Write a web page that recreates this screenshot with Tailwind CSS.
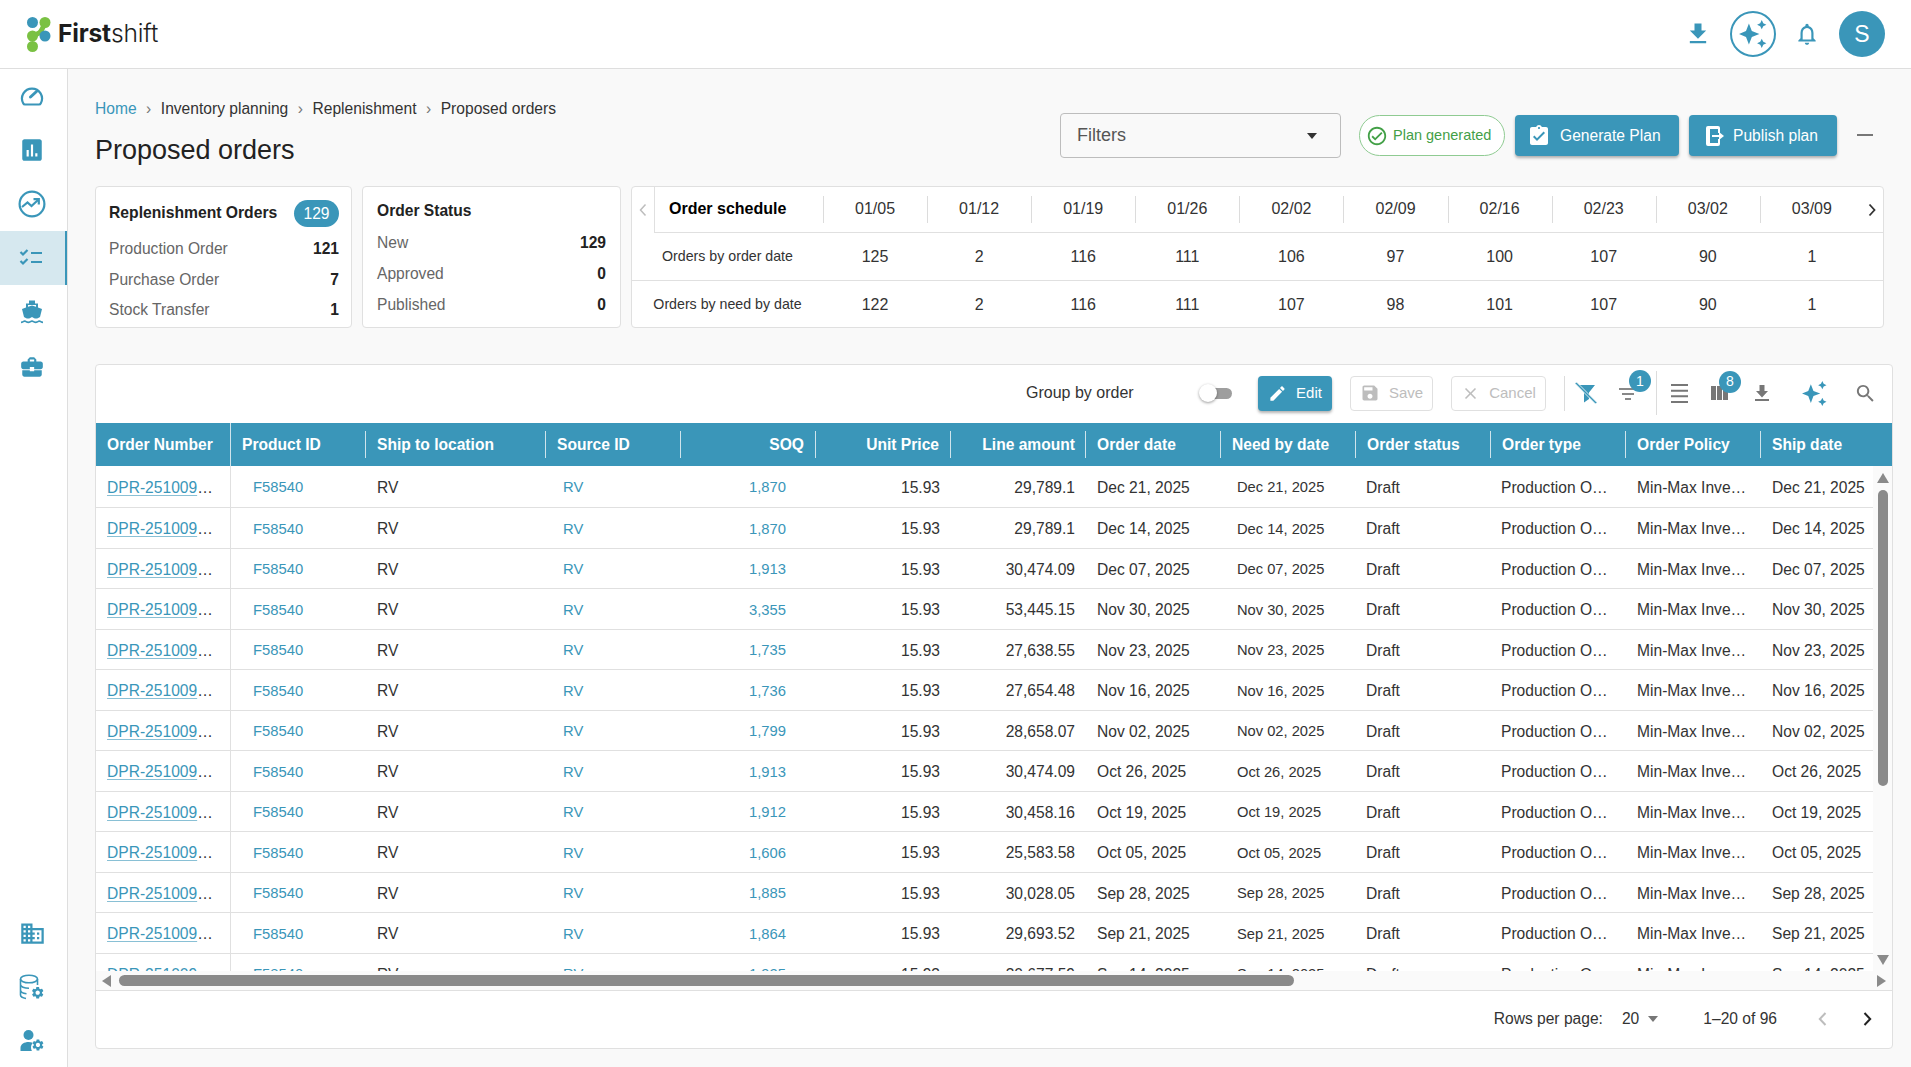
<!DOCTYPE html>
<html lang="en">
<head>
    <meta charset="UTF-8">
    <title>Firstshift - Proposed orders</title>
    <script src="https://cdn.jsdelivr.net/npm/@tailwindcss/browser@4"></script>
</head>
<body class="h-screen overflow-hidden bg-[#f9f9f9] text-[15.6px] text-[#333] font-['Liberation_Sans',Arial,sans-serif]">

    <!-- top bar -->
    <header class="h-[69px] bg-white border-b border-[#dedede] flex items-center">
        <svg class="ml-[26px] w-[26px] h-[36px] -mt-[1px]" viewBox="0 0 26 36">
            <path d="M6 25 C6 20 9 19 13 17 C16 15 16 12 19 8" stroke="#7ac143" stroke-width="5" fill="none"/>
            <circle cx="6.5" cy="6.5" r="5.5" fill="#3a96b9"/>
            <circle cx="19" cy="6.5" r="5.5" fill="#7ac143"/>
            <circle cx="19" cy="20" r="5.5" fill="#3a96b9"/>
            <circle cx="6.5" cy="20" r="5.5" fill="#7ac143"/>
            <circle cx="6.5" cy="30.5" r="5.5" fill="#7ac143"/>
        </svg>
        <div class="ml-[6px] -mt-[2px] text-[24.6px] leading-none text-[#1d1d1d] font-['Inter',sans-serif] tracking-[-0.2px]"><span class="font-bold">First</span><span class="font-light">shift</span></div>

        <div class="ml-auto flex items-center pr-[26px]">
            <svg class="w-[28px] h-[28px] text-[#3a96b9]" viewBox="0 0 24 24" fill="currentColor"><path d="M19 9h-4V3H9v6H5l7 7 7-7zM5 18v2h14v-2H5z"/></svg>
            <div class="ml-[18px] w-[46px] h-[46px] rounded-full border-2 border-[#3a96b9] flex items-center justify-center text-[#3a96b9]">
                <svg class="w-[28px] h-[28px]" viewBox="0 0 24 24" fill="currentColor"><path d="M8.5 3 11 9.5 17.5 12 11 14.5 8.5 21 6 14.5 0 12 6 9.5Z M19.5 0 20.8 2.700 23.5 4 20.8 5.300 19.5 8 18.2 5.300 15.5 4 18.2 2.700Z M19.5 16 20.8 18.700 23.5 20 20.8 21.300 19.500 24 18.200 21.300 15.500 20 18.200 18.700Z"/></svg>
            </div>
            <svg class="ml-[18px] w-[26px] h-[26px] text-[#3a96b9]" viewBox="0 0 24 24" fill="currentColor"><path d="M12 22c1.100 0 2-.9 2-2h-4c0 1.100.9 2 2 2zm6-6v-5c0-3.070-1.630-5.640-4.500-6.320V4c0-.83-.67-1.500-1.500-1.500s-1.500.67-1.500 1.500v.68C7.640 5.360 6 7.920 6 11v5l-2 2v1h16v-1l-2-2zm-2 1H8v-6c0-2.480 1.510-4.500 4-4.500s4 2.020 4 4.500v6z"/></svg>
            <div class="ml-[19px] w-[46px] h-[46px] rounded-full bg-[#3a96b9] text-white text-[23px] flex items-center justify-center">S</div>
        </div>
    </header>

    <div class="flex h-[998px]">
        <!-- side nav -->
        <nav class="w-[68px] shrink-0 bg-white border-r border-[#dedede] flex flex-col justify-between text-[#3a96b9] overflow-hidden">
            <div class="flex flex-col">
                <div class="h-[54px] pr-[3px] flex items-center justify-center">
                    <svg class="w-[24px] h-[24px]" viewBox="0 0 24 24" fill="none" stroke="currentColor" stroke-width="2.2"><path d="M5 20.5h14a2 2 0 0 0 1.8-1.2A10 10 0 1 0 3.2 19.3 2 2 0 0 0 5 20.5z"/><path d="M16.5 7.5 10.5 13" stroke-width="3" stroke-linecap="round"/></svg>
                </div>
                <div class="h-[54px] pr-[3px] flex items-center justify-center">
                    <svg class="w-[26px] h-[26px]" viewBox="0 0 24 24" fill="currentColor"><path d="M19 2H5C3.900 2 3 2.900 3 4v16c0 1.100.9 2 2 2h14c1.100 0 2-.9 2-2V4c0-1.100-.9-2-2-2zM9 18H7v-6h2v6zm4 0h-2V7h2v11zm4 0h-2v-3h2v3z"/></svg>
                </div>
                <div class="h-[54px] pr-[3px] flex items-center justify-center">
                    <svg class="w-[28px] h-[28px]" viewBox="0 0 28 28" fill="none" stroke="currentColor" stroke-width="2.2"><circle cx="14" cy="14" r="12.4"/><path d="M4 17 9.500 12.500 13.500 16 20 10"/><path d="M15.500 9.200H20.800V14.500"/></svg>
                </div>
                <div class="h-[54px] pr-[3px] flex items-center justify-center bg-[#d6e8ef] border-r-2 border-[#3a96b9]">
                    <svg class="w-[24px] h-[24px]" viewBox="0 0 24 24" fill="none" stroke="currentColor" stroke-width="2.2"><path d="M1.500 6 4 8.500 8.500 4"/><path d="M1.500 15 4 17.500 8.500 13"/><path d="M12 7h11M12 16h11"/></svg>
                </div>
                <div class="h-[54px] pr-[3px] flex items-center justify-center">
                    <svg class="w-[24px] h-[26px]" viewBox="0 -1.5 24 26" fill="currentColor"><path d="M9 0h6v3h3v4l4 1.500-2 8c-1 .9-2.500 1.500-4 1.500-1.600 0-3-.6-4-1.500-1 .9-2.400 1.500-4 1.500-1.500 0-3-.6-4-1.500l-2-8L6 7V3h3z"/><path d="M8 6.200 12 5l4 1.200v-1.600H8z" fill="#fff"/><path d="M1 21c2 0 2-1.300 3.700-1.300S6.700 21 8.300 21s2-1.300 3.700-1.300S14 21 15.700 21s2-1.300 3.600-1.300S21.500 21 23 21v1.800c-2 0-2-1.300-3.700-1.300s-2 1.300-3.600 1.300-2-1.300-3.700-1.300-2 1.300-3.700 1.300-2-1.300-3.600-1.300S2.800 22.800 1 22.800z"/></svg>
                </div>
                <div class="h-[54px] pr-[3px] pt-[2px] flex items-center justify-center">
                    <svg class="w-[26px] h-[26px]" viewBox="0 0 24 24" fill="currentColor"><path d="M10 16v-1H3.010L3 19c0 1.110.89 2 2 2h14c1.110 0 2-.89 2-2v-4h-7v1h-4zm10-9h-4.010V5l-2-2h-4l-2 2v2H4c-1.100 0-2 .9-2 2v3c0 1.110.89 2 2 2h6v-2h4v2h6c1.100 0 2-.9 2-2V9c0-1.100-.9-2-2-2zm-6 0h-4V5h4v2z"/></svg>
                </div>
            </div>
            <div class="flex flex-col -mb-[1px]">
                <div class="h-[54px] pr-[3px] flex items-center justify-center">
                    <svg class="w-[27px] h-[27px]" viewBox="0 0 24 24" fill="currentColor"><path d="M12 7V3H2v18h20V7H12zM6 19H4v-2h2v2zm0-4H4v-2h2v2zm0-4H4V9h2v2zm0-4H4V5h2v2zm4 12H8v-2h2v2zm0-4H8v-2h2v2zm0-4H8V9h2v2zm0-4H8V5h2v2zm10 12h-8v-2h2v-2h-2v-2h2v-2h-2V9h8v10zm-2-8h-2v2h2v-2zm0 4h-2v2h2v-2z"/></svg>
                </div>
                <div class="h-[54px] pr-[3px] flex items-center justify-center">
                    <svg class="w-[26px] h-[26px]" viewBox="0 0 26 26" fill="none" stroke="currentColor" stroke-width="1.6">
                        <ellipse cx="10" cy="5" rx="8.5" ry="3.8"/>
                        <path d="M1.500 5v16c0 1.800 2.600 3 5.500 3.500M18.500 5v6M1.500 10.500c0 2.200 3.800 3.800 8.500 3.800M1.500 16c0 2 2.500 3.400 6 3.700"/>
                        <g transform="translate(11.5 11.5) scale(.6)" fill="currentColor" stroke="none"><path d="M19.140 12.940c.04-.3.06-.61.06-.94 0-.32-.02-.64-.07-.94l2.030-1.580a.49.49 0 0 0 .12-.61l-1.920-3.320a.488.488 0 0 0-.59-.22l-2.390.96c-.5-.38-1.030-.7-1.620-.94l-.36-2.540a.484.484 0 0 0-.48-.41h-3.840c-.24 0-.43.17-.47.41l-.36 2.540c-.59.24-1.130.57-1.620.94l-2.390-.96c-.22-.08-.47 0-.59.22L2.740 8.870c-.12.21-.08.47.12.61l2.030 1.580c-.05.3-.09.63-.09.94s.02.64.07.94l-2.030 1.580a.49.49 0 0 0-.12.61l1.920 3.320c.12.22.37.29.59.22l2.390-.96c.5.38 1.030.7 1.620.94l.36 2.540c.05.24.24.41.48.41h3.840c.24 0 .44-.17.47-.41l.36-2.540c.59-.24 1.130-.56 1.620-.94l2.390.96c.22.08.47 0 .59-.22l1.920-3.320c.12-.22.07-.47-.12-.61l-2.010-1.580zM12 15.600c-1.980 0-3.600-1.620-3.600-3.600s1.620-3.600 3.600-3.600 3.600 1.620 3.600 3.600-1.620 3.600-3.600 3.600z"/></g>
                    </svg>
                </div>
                <div class="h-[54px] pr-[3px] flex items-center justify-center">
                    <svg class="w-[26px] h-[24px]" viewBox="0 0 26 24" fill="currentColor">
                        <circle cx="9.5" cy="6" r="5"/>
                        <path d="M1.500 22v-3c0-4 4-6 8-6 1.600 0 3 .3 4.200.8-1 1.500-1.700 3-1.700 4.700 0 1.300.3 2.400.9 3.500z"/>
                        <g transform="translate(12 9) scale(.58)"><path d="M19.140 12.940c.04-.3.06-.61.06-.94 0-.32-.02-.64-.07-.94l2.030-1.580a.49.49 0 0 0 .12-.61l-1.920-3.320a.488.488 0 0 0-.59-.22l-2.390.96c-.5-.38-1.030-.7-1.620-.94l-.36-2.540a.484.484 0 0 0-.48-.41h-3.840c-.24 0-.43.17-.47.41l-.36 2.540c-.59.24-1.130.57-1.620.94l-2.390-.96c-.22-.08-.47 0-.59.22L2.740 8.870c-.12.21-.08.47.12.61l2.030 1.580c-.05.3-.09.63-.09.94s.02.64.07.94l-2.030 1.580a.49.49 0 0 0-.12.61l1.920 3.320c.12.22.37.29.59.22l2.390-.96c.5.38 1.030.7 1.620.94l.36 2.540c.05.24.24.41.48.41h3.840c.24 0 .44-.17.47-.41l.36-2.540c.59-.24 1.130-.56 1.620-.94l2.390.96c.22.08.47 0 .59-.22l1.920-3.320c.12-.22.07-.47-.12-.61l-2.010-1.580zM12 15.600c-1.980 0-3.600-1.620-3.600-3.600s1.620-3.600 3.600-3.600 3.600 1.620 3.600 3.600-1.620 3.600-3.600 3.600z"/></g>
                    </svg>
                </div>
            </div>
        </nav>

        <main class="flex-1 pl-[27px] min-w-0">
            <!-- page head -->
            <div class="w-[1789px] h-[117px] flex justify-between">
                <div class="pt-[29px]">
                    <div class="flex items-center gap-[9.5px] h-[22px] leading-[22px]">
                        <a class="text-[#3a96b9]">Home</a><span class="text-[#777]">›</span>
                        <span>Inventory planning</span><span class="text-[#777]">›</span>
                        <span>Replenishment</span><span class="text-[#777]">›</span>
                        <span>Proposed orders</span>
                    </div>
                    <h1 class="mt-[12px] text-[27px] leading-[36px] text-[#222]">Proposed orders</h1>
                </div>
                <div class="flex items-start pt-[44px] pr-[11px]">
                    <div class="w-[281px] h-[45px] rounded-[4px] border border-[#bdbdbd] flex items-center justify-between pl-[16px] pr-[23px] text-[18px] text-[#555]">
                        <span>Filters</span>
                        <span class="w-0 h-0 border-x-[5.5px] border-x-transparent border-t-[6px] border-t-[#333]"></span>
                    </div>
                    <div class="ml-[18px] mt-[2px] w-[146px] h-[41px] rounded-full border border-[#8fcb92] bg-white flex items-center pl-[6px] text-[14.5px] text-[#43a047]">
                        <svg class="w-[22px] h-[22px] shrink-0" viewBox="0 0 24 24" fill="currentColor"><path d="M12 2C6.480 2 2 6.480 2 12s4.480 10 10 10 10-4.480 10-10S17.520 2 12 2zm0 18c-4.410 0-8-3.590-8-8s3.590-8 8-8 8 3.590 8 8-3.590 8-8 8zm4.590-12.420L10 14.170l-2.590-2.580L6 13l4 4 8-8z"/></svg>
                        <span class="ml-[5px] whitespace-nowrap">Plan generated</span>
                    </div>
                    <button class="ml-[10px] mt-[2px] w-[164px] h-[41px] rounded-[4px] bg-[#3a96b9] text-white flex items-center pl-[12px] shadow-[0_2px_3px_rgba(0,0,0,0.3)]">
                        <svg class="w-[24px] h-[24px] shrink-0" viewBox="0 0 24 24" fill="currentColor"><path d="M19 3h-4.180C14.400 1.840 13.300 1 12 1c-1.300 0-2.400.84-2.820 2H5c-1.100 0-2 .9-2 2v14c0 1.100.9 2 2 2h14c1.100 0 2-.9 2-2V5c0-1.100-.9-2-2-2zm-7 0c.55 0 1 .45 1 1s-.45 1-1 1-1-.45-1-1 .45-1 1-1zm-2 14l-4-4 1.410-1.410L10 14.170l6.590-6.590L18 9l-8 8z"/></svg>
                        <span class="ml-[9px] whitespace-nowrap">Generate Plan</span>
                    </button>
                    <button class="ml-[10px] mt-[2px] w-[148px] h-[41px] rounded-[4px] bg-[#3a96b9] text-white flex items-center pl-[13px] shadow-[0_2px_3px_rgba(0,0,0,0.3)]">
                        <svg class="w-[24px] h-[24px] shrink-0" viewBox="0 0 24 24" fill="currentColor"><path d="M6 2h10a2 2 0 0 1 2 2v5h-2V5H8v14h8v-4h2v5a2 2 0 0 1-2 2H6a2 2 0 0 1-2-2V4a2 2 0 0 1 2-2z"/><path d="M10 11h7V8l5 4-5 4v-3h-7z"/></svg>
                        <span class="ml-[7px] whitespace-nowrap">Publish plan</span>
                    </button>
                    <div class="ml-[20px] mt-[21px] w-[16px] h-[2px] bg-[#777]"></div>
                </div>
            </div>

            <!-- summary cards -->
            <div class="flex gap-[10px] h-[142px] w-[1789px]">
                <div class="w-[257px] bg-white border border-[#e0e0e0] rounded-[4px] pl-[13px] pr-[12px] pt-[13px]">
                    <div class="flex items-center justify-between h-[27px]">
                        <span class="-mt-[2px] font-bold text-[#222] text-[15.7px]">Replenishment Orders</span>
                        <span class="w-[45px] h-[27px] rounded-full bg-[#3a96b9] text-white flex items-center justify-center">129</span>
                    </div>
                    <div class="mt-[6px] text-[#666]">
                        <div class="h-[31px] flex items-center justify-between"><span>Production Order</span><b class="text-[#222]">121</b></div>
                        <div class="h-[31px] flex items-center justify-between"><span>Purchase Order</span><b class="text-[#222]">7</b></div>
                        <div class="h-[30px] flex items-center justify-between"><span>Stock Transfer</span><b class="text-[#222]">1</b></div>
                    </div>
                </div>
                <div class="w-[259px] bg-white border border-[#e0e0e0] rounded-[4px] pl-[14px] pr-[14px] pt-[12px]">
                    <div class="h-[24px] leading-[24px] font-bold text-[#222]">Order Status</div>
                    <div class="mt-[4px] text-[#666]">
                        <div class="h-[31px] flex items-center justify-between"><span>New</span><b class="text-[#222]">129</b></div>
                        <div class="h-[31px] flex items-center justify-between"><span>Approved</span><b class="text-[#222]">0</b></div>
                        <div class="h-[31px] flex items-center justify-between"><span>Published</span><b class="text-[#222]">0</b></div>
                    </div>
                </div>
                <div class="flex-1 min-w-0 bg-white border border-[#e0e0e0] rounded-[4px] flex flex-col">
                    <div class="h-[46px] flex">
                        <div class="w-[22px] shrink-0 flex items-center justify-center">
                            <svg class="w-[12px] h-[14px] text-[#bdbdbd]" viewBox="0 0 12 14" fill="none" stroke="currentColor" stroke-width="1.5"><path d="M8.500 1.500 3.500 7l5 5.500"/></svg>
                        </div>
                        <div class="flex-1 flex border-l border-b border-[#e0e0e0]">
                            <div class="w-[168px] shrink-0 pl-[14px] pb-[2px] flex items-center font-bold text-black text-[16px]">Order schedule</div>
                            <div class="flex text-[16px]" id="schedHead"></div>
                            <div class="flex-1 flex items-center justify-center">
                                <svg class="w-[12px] h-[14px] text-[#333] -ml-[2px]" viewBox="0 0 12 14" fill="none" stroke="currentColor" stroke-width="1.8"><path d="M3.500 1.500 8.500 7l-5 5.500"/></svg>
                            </div>
                        </div>
                    </div>
                    <div class="h-[48px] flex items-center border-b border-[#e0e0e0] text-[16px]">
                        <div class="w-[191px] shrink-0 text-center text-[14.2px]">Orders by order date</div>
                        <div class="flex" id="schedRow1"></div>
                    </div>
                    <div class="flex-1 flex items-center pt-[1px] text-[16px]">
                        <div class="w-[191px] shrink-0 text-center text-[14.2px] whitespace-nowrap">Orders by need by date</div>
                        <div class="flex" id="schedRow2"></div>
                    </div>
                </div>
            </div>

            <!-- orders table -->
            <section class="mt-[36px] w-[1798px] h-[685px] bg-white border border-[#e0e0e0] rounded-[4px] flex flex-col overflow-hidden">
                <div class="h-[58px] shrink-0 flex items-center pl-[930px] pb-[2px]">
                    <span class="w-[106px] whitespace-nowrap text-[16px]">Group by order</span>
                    <div class="relative ml-[67px] w-[33px] h-[18px]">
                        <div class="absolute left-[6px] right-0 top-[3.5px] h-[11px] rounded-full bg-[#9e9e9e]"></div>
                        <div class="absolute left-0 top-0 w-[18px] h-[18px] rounded-full bg-white shadow-[0_1px_3px_rgba(0,0,0,0.4)]"></div>
                    </div>
                    <button class="ml-[26px] w-[74px] h-[35px] rounded-[4px] bg-[#3a96b9] text-white text-[15px] flex items-center justify-center gap-[9px] shadow-[0_2px_3px_rgba(0,0,0,0.3)]">
                        <svg class="w-[19px] h-[19px]" viewBox="0 0 24 24" fill="currentColor"><path d="M3 17.250V21h3.750L17.810 9.940l-3.750-3.750L3 17.250zM20.710 7.040c.39-.39.39-1.020 0-1.410l-2.340-2.340c-.39-.39-1.020-.39-1.410 0l-1.830 1.830 3.750 3.750 1.830-1.830z"/></svg>
                        Edit
                    </button>
                    <button class="ml-[18px] w-[83px] h-[35px] rounded-[4px] border border-[#e0e0e0] text-[#bdbdbd] text-[15px] flex items-center justify-center gap-[9px]">
                        <svg class="w-[20px] h-[20px]" viewBox="0 0 24 24" fill="currentColor"><path d="M17 3H5c-1.110 0-2 .9-2 2v14c0 1.100.89 2 2 2h14c1.100 0 2-.9 2-2V7l-4-4zm-5 16c-1.660 0-3-1.340-3-3s1.340-3 3-3 3 1.340 3 3-1.340 3-3 3zm3-10H5V5h10v4z"/></svg>
                        Save
                    </button>
                    <button class="ml-[18px] w-[95px] h-[35px] rounded-[4px] border border-[#e0e0e0] text-[#bdbdbd] text-[15px] flex items-center justify-center gap-[9px]">
                        <svg class="w-[19px] h-[19px]" viewBox="0 0 24 24" fill="currentColor"><path d="M19 6.410 17.590 5 12 10.590 6.410 5 5 6.410 10.590 12 5 17.590 6.410 19 12 13.410 17.590 19 19 17.590 13.410 12z"/></svg>
                        Cancel
                    </button>
                    <div class="ml-[18px] w-px h-[35px] bg-[#dcdcdc]"></div>
                    <svg class="ml-[10px] w-[22px] h-[22px] text-[#3a96b9]" viewBox="0 0 22 22" fill="currentColor"><path d="M3 3h17l-6 7.500V17l-5 3.500v-10z"/><path d="M0 1.500 1.500 0 22 20.500 20.500 22z" stroke="#fff" stroke-width=".8"/></svg>
                    <div class="relative ml-[22px] w-[18px] h-[22px] text-[#888]">
                        <svg class="absolute left-0 top-[4px] w-[18px] h-[16px]" viewBox="0 0 18 16" fill="currentColor"><path d="M0 2h18v2H0zM3 7h12v2H3zM6 12h6v2H6z"/></svg>
                        <span class="absolute -top-[12px] left-[10px] w-[22px] h-[22px] rounded-full bg-[#3a96b9] text-white text-[14px] flex items-center justify-center">1</span>
                    </div>
                    <div class="ml-[19px] w-px h-[44px] bg-[#dcdcdc]"></div>
                    <svg class="ml-[14px] w-[17px] h-[19px] text-[#777]" viewBox="0 0 17 19" fill="currentColor"><path d="M0 0h17v2H0zM0 5.700h17v2H0zM0 11.300h17v2H0zM0 17h17v2H0z"/></svg>
                    <div class="relative ml-[23px] w-[17px] h-[14px] mt-[-1px] text-[#777]">
                        <svg class="absolute inset-0 w-[17px] h-[14px]" viewBox="0 0 17 14" fill="currentColor"><path d="M0 0h5v14H0zM6 0h5v14H6zM12 0h5v14h-5z"/></svg>
                        <span class="absolute -top-[15px] left-[8px] w-[22px] h-[22px] rounded-full bg-[#3a96b9] text-white text-[14px] flex items-center justify-center">8</span>
                    </div>
                    <svg class="ml-[27px] w-[14px] h-[16px] text-[#777]" viewBox="0 0 14 16" fill="currentColor"><path d="M4.500 0h5v6H13l-6 6.500L1 6h3.500zM0 14h14v2H0z"/></svg>
                    <svg class="ml-[33px] w-[25px] h-[25px] text-[#3a96b9]" viewBox="0 0 24 24" fill="currentColor"><path d="M8.5 3 11 9.5 17.5 12 11 14.5 8.5 21 6 14.5 0 12 6 9.5Z M19.5 0 20.8 2.700 23.5 4 20.8 5.300 19.5 8 18.2 5.300 15.5 4 18.2 2.700Z M19.5 16 20.8 18.700 23.5 20 20.8 21.300 19.500 24 18.200 21.300 15.500 20 18.200 18.700Z"/></svg>
                    <svg class="ml-[27px] w-[23px] h-[23px] text-[#777]" viewBox="0 0 24 24" fill="currentColor"><path d="M15.500 14h-.79l-.28-.27C15.410 12.590 16 11.110 16 9.500 16 5.910 13.090 3 9.500 3S3 5.910 3 9.500 5.910 16 9.500 16c1.610 0 3.090-.59 4.230-1.570l.27.28v.79l5 4.990L20.490 19l-4.990-5zm-6 0C7.010 14 5 11.990 5 9.500S7.010 5 9.500 5 14 7.010 14 9.500 11.990 14 9.500 14z"/></svg>
                </div>

                <div class="h-[43px] shrink-0 bg-[#3a96b9] text-white font-bold flex items-center overflow-hidden whitespace-nowrap">
                    <div class="w-[135px] shrink-0 h-full pl-[11px] flex items-center border-r border-[#cfe4ec]">Order Number</div>
                    <div class="w-[135px] shrink-0 h-[27px] pl-[11px] flex items-center border-r border-[#cfe4ec]">Product ID</div>
                    <div class="w-[180px] shrink-0 h-[27px] pl-[11px] flex items-center border-r border-[#cfe4ec]">Ship to location</div>
                    <div class="w-[135px] shrink-0 h-[27px] pl-[11px] flex items-center border-r border-[#cfe4ec]">Source ID</div>
                    <div class="w-[135px] shrink-0 h-[27px] pr-[11px] flex items-center justify-end border-r border-[#cfe4ec]">SOQ</div>
                    <div class="w-[135px] shrink-0 h-[27px] pr-[11px] flex items-center justify-end border-r border-[#cfe4ec]">Unit Price</div>
                    <div class="w-[135px] shrink-0 h-[27px] pr-[10px] flex items-center justify-end border-r border-[#cfe4ec]">Line amount</div>
                    <div class="w-[135px] shrink-0 h-[27px] pl-[11px] flex items-center border-r border-[#cfe4ec]">Order date</div>
                    <div class="w-[135px] shrink-0 h-[27px] pl-[11px] flex items-center border-r border-[#cfe4ec]">Need by date</div>
                    <div class="w-[135px] shrink-0 h-[27px] pl-[11px] flex items-center border-r border-[#cfe4ec]">Order status</div>
                    <div class="w-[135px] shrink-0 h-[27px] pl-[11px] flex items-center border-r border-[#cfe4ec]">Order type</div>
                    <div class="w-[135px] shrink-0 h-[27px] pl-[11px] flex items-center border-r border-[#cfe4ec]">Order Policy</div>
                    <div class="w-[135px] shrink-0 h-[27px] pl-[11px] flex items-center">Ship date</div>
                </div>

                <div class="h-[505px] shrink-0 flex">
                    <div class="w-[1777px] shrink-0 overflow-hidden" id="rows"></div>
                    <div class="flex-1 bg-[#fafafa] flex flex-col items-center pt-[7px] pb-[6px]">
                        <span class="w-0 h-0 border-x-[6px] border-x-transparent border-b-[10px] border-b-[#8a8a8a]"></span>
                        <div class="mt-[7px] w-[10px] h-[296px] rounded-full bg-[#8a8a8a]"></div>
                        <span class="mt-auto w-0 h-0 border-x-[6px] border-x-transparent border-t-[10px] border-t-[#8a8a8a]"></span>
                    </div>
                </div>

                <div class="h-[19px] shrink-0 bg-[#fafafa] flex items-center pl-[6px] pr-[6px]">
                    <span class="w-0 h-0 border-y-[6px] border-y-transparent border-r-[9px] border-r-[#8a8a8a]"></span>
                    <div class="ml-[8px] w-[1175px] h-[11px] rounded-full bg-[#8a8a8a]"></div>
                    <span class="ml-auto w-0 h-0 border-y-[6px] border-y-transparent border-l-[9px] border-l-[#8a8a8a]"></span>
                </div>

                <div class="flex-1 border-t border-[#e0e0e0] flex items-center justify-end pr-[20px] pb-[2px]">
                    <span class="whitespace-nowrap">Rows per page:</span>
                    <span class="ml-[19px]">20</span>
                    <span class="ml-[9px] w-0 h-0 border-x-[5.5px] border-x-transparent border-t-[6px] border-t-[#777]"></span>
                    <span class="ml-[45px] whitespace-nowrap">1–20 of 96</span>
                    <svg class="ml-[41px] w-[9px] h-[14px] text-[#bdbdbd]" viewBox="0 0 9 14" fill="none" stroke="currentColor" stroke-width="2"><path d="M7.500 1 1.800 7l5.700 6"/></svg>
                    <svg class="ml-[36px] w-[9px] h-[14px] text-[#222]" viewBox="0 0 9 14" fill="none" stroke="currentColor" stroke-width="2"><path d="M1.500 1l5.700 6-5.700 6"/></svg>
                </div>
            </section>
        </main>
    </div>

    <script>
        // schedule strip
        const weeks = ['01/05','01/12','01/19','01/26','02/02','02/09','02/16','02/23','03/02','03/09'];
        const byOrder = [125,2,116,111,106,97,100,107,90,1];
        const byNeed = [122,2,116,111,107,98,101,107,90,1];

        document.getElementById('schedHead').innerHTML = weeks.map(w =>
            `<div class="w-[104.1px] pb-[1px] flex items-center justify-center relative"><span class="absolute left-0 top-[9px] h-[27px] w-px bg-[#dcdcdc]"></span>${w}</div>`).join('');
        document.getElementById('schedRow1').innerHTML = byOrder.map(v =>
            `<div class="w-[104.1px] text-center">${v}</div>`).join('');
        document.getElementById('schedRow2').innerHTML = byNeed.map(v =>
            `<div class="w-[104.1px] text-center">${v}</div>`).join('');

        // order rows
        const orders = [
            ['1,870','29,789.1','Dec 21, 2025'],
            ['1,870','29,789.1','Dec 14, 2025'],
            ['1,913','30,474.09','Dec 07, 2025'],
            ['3,355','53,445.15','Nov 30, 2025'],
            ['1,735','27,638.55','Nov 23, 2025'],
            ['1,736','27,654.48','Nov 16, 2025'],
            ['1,799','28,658.07','Nov 02, 2025'],
            ['1,913','30,474.09','Oct 26, 2025'],
            ['1,912','30,458.16','Oct 19, 2025'],
            ['1,606','25,583.58','Oct 05, 2025'],
            ['1,885','30,028.05','Sep 28, 2025'],
            ['1,864','29,693.52','Sep 21, 2025'],
            ['1,925','30,677.59','Sep 14, 2025']
        ];

        document.getElementById('rows').innerHTML = orders.map((o, i) => `
            <div class="${i === 0 ? 'h-[42px]' : 'h-[40.5px]'} flex items-center border-b border-[#e0e0e0] whitespace-nowrap">
                <div class="w-[135px] shrink-0 h-full pl-[11px] pr-[13px] pt-[2px] flex items-center border-r border-[#e0e0e0]"><div class="truncate"><a class="text-[#3a96b9] underline decoration-[#3a96b9]/60 underline-offset-2">DPR-251009-00${i + 1}</a></div></div>
                <div class="w-[135px] shrink-0 h-full pt-[2px] flex items-center pl-[22px] text-[14.8px] text-[#3a96b9]">F58540</div>
                <div class="w-[180px] shrink-0 h-full pt-[2px] flex items-center pl-[11px]">RV</div>
                <div class="w-[135px] shrink-0 h-full pt-[2px] flex items-center pl-[17px] text-[14.8px] text-[#3a96b9]">RV</div>
                <div class="w-[135px] shrink-0 h-full pt-[2px] flex items-center justify-end pr-[30px] text-[14.8px] text-[#3a96b9]">${o[0]}</div>
                <div class="w-[135px] shrink-0 h-full pt-[2px] flex items-center justify-end pr-[11px]">15.93</div>
                <div class="w-[135px] shrink-0 h-full pt-[2px] flex items-center justify-end pr-[11px]">${o[1]}</div>
                <div class="w-[135px] shrink-0 h-full pt-[2px] flex items-center pl-[11px]">${o[2]}</div>
                <div class="w-[135px] shrink-0 h-full pt-[2px] flex items-center pl-[16px] text-[14.7px]">${o[2]}</div>
                <div class="w-[135px] shrink-0 h-full pt-[2px] flex items-center pl-[10px]">Draft</div>
                <div class="w-[135px] shrink-0 pt-[2px] pl-[10px] pr-[15px] truncate">Production Order</div>
                <div class="w-[135px] shrink-0 pt-[2px] pl-[11px] pr-[10px] truncate">Min-Max Inventory</div>
                <div class="w-[112px] shrink-0 h-full pt-[2px] flex items-center pl-[11px]">${o[2]}</div>
            </div>`).join('');
    </script>
</body>
</html>
